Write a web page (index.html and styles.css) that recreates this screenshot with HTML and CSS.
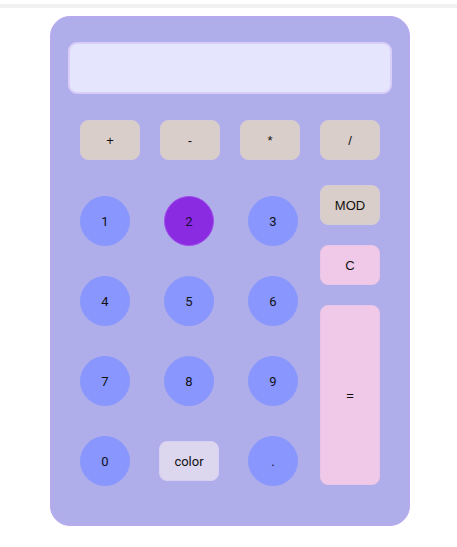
FILE: index.html
```html
<!DOCTYPE html>
<html>
<head>
<meta charset="utf-8">
<link rel="stylesheet" href="styles.css">
</head>
<body>
<div class="topbar"></div>
<div class="calc">
  <div class="display"></div>
  <div class="ops">
    <button class="btn op">+</button>
    <button class="btn op">-</button>
    <button class="btn op">*</button>
    <button class="btn op">/</button>
  </div>
  <div class="body">
    <div class="nums">
      <button class="num">1</button>
      <button class="num active">2</button>
      <button class="num">3</button>
      <button class="num">4</button>
      <button class="num">5</button>
      <button class="num">6</button>
      <button class="num">7</button>
      <button class="num">8</button>
      <button class="num">9</button>
      <button class="num">0</button>
      <button class="btn colorbtn">color</button>
      <button class="num">.</button>
    </div>
    <div class="side">
      <button class="btn op">MOD</button>
      <button class="btn pink">C</button>
      <button class="btn pink eq">=</button>
    </div>
  </div>
</div>
</body>
</html>
```
FILE: styles.css
```css
html, body { margin: 0; padding: 0; background: #fff; }
body { font-family: "Liberation Sans", Arial, sans-serif; }
.topbar { height: 4px; margin-top: 4px; background: #f1f1f1; }
.calc {
  box-sizing: border-box;
  margin: 8px 0 0 50px;
  width: 360px;
  height: 510px;
  background: #afaeeb;
  border: 1.5px solid #bba7ef;
  border-radius: 20px;
  padding: 25px 17px 0 17px;
}
.display {
  box-sizing: border-box;
  height: 52px;
  background: #e6e5fe;
  border: 2px solid #d9cef8;
  border-radius: 9px;
}
button { margin: 0; padding: 0; cursor: pointer; color: #111; }
.btn {
  box-sizing: border-box;
  width: 60px;
  height: 40px;
  border: none;
  border-radius: 8px;
  font-family: "Liberation Sans", Arial, sans-serif;
  font-size: 13px;
}
.op { background: #d9cec9; border: 1px solid #d6ccd5; }
.pink { background: #efc9e7; border: 1px solid #e8c4e6; }
.ops {
  display: flex;
  gap: 20px;
  padding-left: 12px;
  margin-top: 26px;
}
.body {
  display: flex;
  margin-top: 25px;
  padding-left: 12px;
  align-items: flex-start;
}
.nums {
  margin-top: 11px;
  display: grid;
  grid-template-columns: repeat(3, 50px);
  grid-auto-rows: 50px;
  column-gap: 34px;
  row-gap: 30px;
  width: 240px;
  justify-items: center;
  align-items: center;
}
.num {
  box-sizing: border-box;
  width: 50px;
  height: 50px;
  border-radius: 50%;
  border: 1px solid #8a97fc;
  background: #8896fe;
  font-family: Roboto, "Liberation Sans", sans-serif;
  font-size: 13px;
}
.num.active { background: #8a2be2; border: 1px solid #a04ee8; color: #1c0f3c; }
.colorbtn {
  background: #dcd6ef;
  border: 1px solid #d8d0f2;
  font-family: Roboto, "Liberation Sans", sans-serif;
  font-size: 13px;
}
.side {
  display: flex;
  flex-direction: column;
  gap: 20px;
}
.eq { height: 180px; }
```
